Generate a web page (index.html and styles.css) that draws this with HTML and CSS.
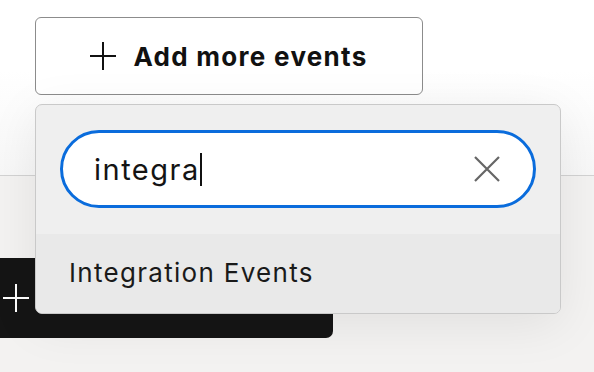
FILE: index.html
```html
<!DOCTYPE html>
<html lang="en">
<head>
    <meta charset="UTF-8">
    <meta name="viewport" content="width=device-width, initial-scale=1.0">
    <title>Add more events</title>
    <link rel="stylesheet" href="styles.css">
</head>
<body>
    <!-- Top area with the add button -->
    <header class="top">
        <button class="add-btn" type="button">
            <svg class="plus" width="26" height="28" viewBox="0 0 26 28"><path d="M13 0v28M0 14h26" stroke="#111" stroke-width="2" fill="none"/></svg>
            <span>Add more events</span>
        </button>
    </header>

    <!-- Lower area -->
    <main class="lower">
        <div class="dark-bar">
            <svg class="plus-light" width="26" height="28" viewBox="0 0 26 28"><path d="M13 0v28M0 14h26" stroke="#fff" stroke-width="2" fill="none"/></svg>
        </div>
    </main>

    <!-- Event search popover -->
    <div class="popover">
        <div class="search-wrap">
            <div class="search">
                <span class="query">integra</span><span class="caret"></span>
                <svg class="clear" width="26" height="26" viewBox="0 0 26 26"><path d="M1 1l24 24M25 1L1 25" stroke="#666" stroke-width="2.2" fill="none"/></svg>
            </div>
        </div>
        <ul class="results">
            <li>Integration Events</li>
        </ul>
    </div>
</body>
</html>
```

FILE: styles.css
```css
/* Basic styling */
body {
    margin: 0;
    font-family: Inter, "Noto Sans", sans-serif;
    background: #f3f2f1;
    color: #141414;
    position: relative;
    height: 372px;
    overflow: hidden;
}

.top {
    height: 176px;
    background: linear-gradient(#ffffff 40%, #f7f7f7);
    border-bottom: 1px solid #d2d2d2;
    padding: 17px 0 0 35px;
    box-sizing: border-box;
}

.add-btn {
    width: 388px;
    height: 78px;
    display: flex;
    align-items: center;
    justify-content: center;
    gap: 17px;
    background: #fff;
    border: 1.5px solid #8c8c8c;
    border-radius: 6px;
    font-family: inherit;
    font-size: 26px;
    font-weight: 700;
    letter-spacing: 1.3px;
    color: #111;
    padding: 0;
}

.lower {
    padding-top: 82px;
}

.dark-bar {
    width: 333px;
    height: 80px;
    background: #151515;
    border-radius: 0 0 7px 0;
    display: flex;
    align-items: center;
    padding-left: 3px;
    box-sizing: border-box;
}

/* Popover */
.popover {
    position: absolute;
    top: 104px;
    left: 35px;
    width: 526px;
    height: 210px;
    box-sizing: border-box;
    background: #efefef;
    border: 1.5px solid #c9c9c9;
    border-radius: 7px;
    box-shadow: 0 10px 50px rgba(0, 0, 0, 0.08);
    overflow: hidden;
}

.search-wrap {
    padding: 25px 24px 26px 24px;
}

.search {
    height: 78px;
    box-sizing: border-box;
    background: #fff;
    border: 3.5px solid #0a6cdc;
    border-radius: 40px;
    display: flex;
    align-items: center;
    padding: 0 33px 0 31px;
    font-size: 29px;
}

.query {
    letter-spacing: 1.5px;
}

.caret {
    width: 2px;
    height: 33px;
    background: #111;
    margin-left: 0;
}

.clear {
    margin-left: auto;
}

.results {
    list-style: none;
    margin: 0;
    padding: 0;
}

.results li {
    height: 80px;
    background: #e9e9e9;
    padding: 23px 0 0 33px;
    box-sizing: border-box;
    font-size: 26px;
    letter-spacing: 1.3px;
    color: #1a1a1a;
}
```
